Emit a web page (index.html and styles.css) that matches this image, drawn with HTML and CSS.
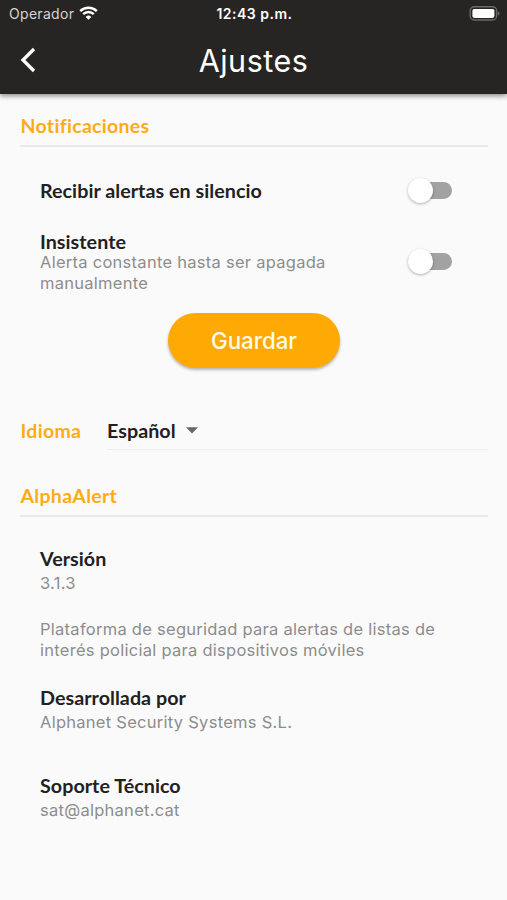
FILE: index.html
```html
<!DOCTYPE html>
<html lang="es">
<head>
<meta charset="utf-8">
<title>Ajustes</title>
<link rel="stylesheet" href="styles.css">
</head>
<body>
<header class="header">
  <div class="status">
    <div class="carrier"><span class="carrier-name">Operador</span>
      <svg class="wifi" viewBox="0 0 19 14" width="19" height="14" fill="none" stroke="#fff" stroke-width="2.4"><path d="M1.2 5.1a11.8 11.8 0 0 1 16.6 0M4.2 8.2a7.5 7.5 0 0 1 10.6 0"/><path d="M6.7 10.9a4 4 0 0 1 5.6 0L9.5 13.7z" fill="#fff" stroke="none"/></svg>
    </div>
    <span class="time">12:43 p.m.</span>
    <svg class="battery" viewBox="0 0 31 15" width="31" height="15"><rect x="1.2" y=".8" width="26.4" height="13.2" rx="4" fill="none" stroke="#6a6967" stroke-width="1.4"/><rect x="3.4" y="2.9" width="22" height="9" rx="1.8" fill="#fff"/><path d="M28.8 5.2q1.8 .8 1.8 2.2T28.8 9.6z" fill="#6a6967"/></svg>
  </div>
  <div class="toolbar">
    <svg class="back" viewBox="0 0 16 26" width="16" height="26" fill="none" stroke="#fff" stroke-width="3.3"><path d="M14 2 3 13 14 24"/></svg>
    <h1 class="title">Ajustes</h1>
  </div>
</header>
<main class="content">
  <h2 class="section">Notificaciones</h2>
  <div class="row silent"><span class="label">Recibir alertas en silencio</span><span class="switch"></span></div>
  <div class="row insist">
    <div><div class="label">Insistente</div><p class="text hint">Alerta constante hasta ser apagada<br>manualmente</p></div>
    <span class="switch"></span>
  </div>
  <button class="save">Guardar</button>
  <div class="language">
    <span class="accent">Idioma</span>
    <div class="select"><span class="label">Español</span><svg class="caret" viewBox="0 0 12 7" width="12" height="7"><path d="M0 .3h12L6 6.5z" fill="#666"/></svg></div>
  </div>
  <h2 class="section about-title">AlphaAlert</h2>
  <div class="info">
    <div class="label">Versión</div>
    <p class="text value">3.1.3</p>
    <p class="text about">Plataforma de seguridad para alertas de listas de<br>interés policial para dispositivos móviles</p>
    <div class="label developer">Desarrollada por</div>
    <p class="text value">Alphanet Security Systems S.L.</p>
    <div class="label support">Soporte Técnico</div>
    <p class="text value">sat@alphanet.cat</p>
  </div>
</main>
</body>
</html>
```
FILE: styles.css
```css
* { box-sizing: border-box; }
body {
  margin: 0;
  height: 900px;
  overflow: hidden;
  background: #fafafa;
  color: #212121;
  font-family: Inter, "Liberation Sans", sans-serif;
}
h1, h2, p { margin: 0; }
.header {
  height: 93.5px;
  background: #262523;
  color: #fff;
  box-shadow: 0 2px 5px rgba(0, 0, 0, .45);
}
.status {
  display: grid;
  grid-template-columns: 1fr auto 1fr;
  align-items: center;
  height: 27px;
  padding: 0 7px 0 9px;
}
.carrier { display: flex; align-items: center; gap: 5px; }
.carrier-name { font-size: 14px; color: #d4d4d3; letter-spacing: .3px; }
.wifi { margin-top: -1px; }
.time { font-size: 14px; font-weight: 600; letter-spacing: .5px; }
.battery { justify-self: end; margin-top: -1px; }
.toolbar {
  display: grid;
  grid-template-columns: 60px 1fr 60px;
  align-items: center;
  height: 66px;
}
.back { margin-left: 20px; }
.title {
  padding-top: 1px;
  font-size: 30.5px;
  font-weight: 400;
  line-height: 37px;
  letter-spacing: .5px;
  text-align: center;
}
.content { padding: 21px 19px 0 20px; }
.section, .label, .accent {
  font-family: Lato, sans-serif;
  font-size: 19.7px;
  font-weight: 700;
  line-height: 22px;
  letter-spacing: .04px;
}
.section, .accent {
  color: #ffac14;
  padding-left: .5px;
  font-size: 19.5px;
  letter-spacing: .3px;
  font-variant-ligatures: none;
}
.section {
  height: 32.5px;
  border-bottom: 2px solid #e9e9e9;
}
.row {
  display: flex;
  justify-content: space-between;
  align-items: center;
  padding: 0 36px 0 20px;
}
.silent { height: 22px; margin-top: 33px; }
.insist { height: 64px; margin-top: 28.5px; }
.text {
  color: #8d8d8d;
  font-size: 16.5px;
  line-height: 20.7px;
  letter-spacing: .27px;
  white-space: nowrap;
}
.hint { margin: -1px 0 1px; }
.switch {
  display: flex;
  align-items: center;
  width: 44px;
  height: 17px;
  margin-top: -2px;
  border-radius: 9px;
  background: linear-gradient(90deg, transparent 12px, #a2a2a2 12px);
}
.switch::before {
  content: "";
  flex: none;
  width: 25px;
  height: 25px;
  border-radius: 50%;
  background: #fff;
  box-shadow: 0 1px 3px rgba(0, 0, 0, .3);
}
.save {
  display: block;
  width: 172px;
  height: 55px;
  margin: 18px auto 0 148px;
  padding: 0;
  border: 0;
  border-radius: 28px;
  background: #ffa904;
  color: #fffbea;
  font: 500 22.3px/55px Inter, sans-serif;
  box-shadow: 0 2px 3px rgba(0, 0, 0, .28);
}
.language { display: flex; margin-top: 52px; height: 30px; }
.accent { width: 87px; }
.select { display: flex; flex: 1; border-bottom: 1.5px solid #eee; }
.caret { margin: 7px 0 0 10px; }
.about-title { margin-top: 35px; height: 32px; }
.info { padding: 31px 0 0 20px; }
.value { margin-top: 3.5px; }
.about { margin-top: 25px; line-height: 21px; }
.developer { margin-top: 26px; }
.support { margin-top: 42px; }
```
